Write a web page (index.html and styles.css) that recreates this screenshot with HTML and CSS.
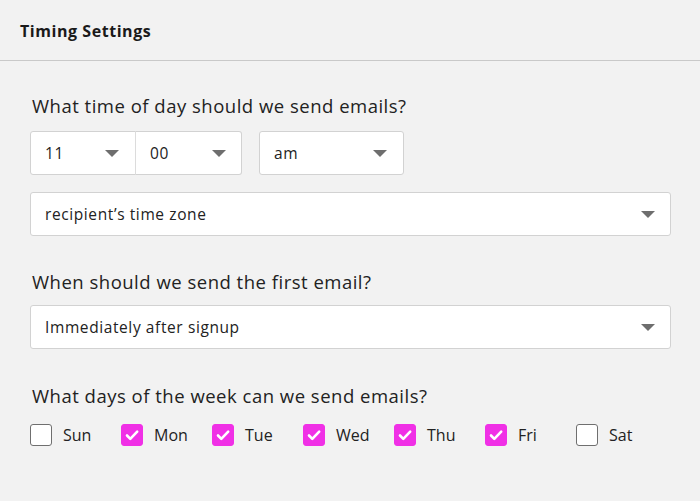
FILE: index.html
```html
<!DOCTYPE html>
<html>
<head>
<meta charset="utf-8">
<link rel="stylesheet" href="styles.css">
</head>
<body>
<header class="header">Timing Settings</header>
<main class="content">
  <div class="question">What time of day should we send emails?</div>
  <div class="time-row">
    <div class="joined">
      <div class="select hour"><span>11</span><span class="arrow"></span></div>
      <div class="select minute"><span>00</span><span class="arrow"></span></div>
    </div>
    <div class="select ampm"><span>am</span><span class="arrow"></span></div>
  </div>
  <div class="select full tz"><span>recipient’s time zone</span><span class="arrow"></span></div>

  <div class="question q2">When should we send the first email?</div>
  <div class="select full first"><span>Immediately after signup</span><span class="arrow"></span></div>

  <div class="question q3">What days of the week can we send emails?</div>
  <div class="days">
    <label class="day"><span class="box"></span>Sun</label>
    <label class="day"><span class="box checked"><svg viewBox="0 0 22 22"><path d="M6 11.5l3.3 3.3L16.2 7.6" /></svg></span>Mon</label>
    <label class="day"><span class="box checked"><svg viewBox="0 0 22 22"><path d="M6 11.5l3.3 3.3L16.2 7.6" /></svg></span>Tue</label>
    <label class="day"><span class="box checked"><svg viewBox="0 0 22 22"><path d="M6 11.5l3.3 3.3L16.2 7.6" /></svg></span>Wed</label>
    <label class="day"><span class="box checked"><svg viewBox="0 0 22 22"><path d="M6 11.5l3.3 3.3L16.2 7.6" /></svg></span>Thu</label>
    <label class="day"><span class="box checked"><svg viewBox="0 0 22 22"><path d="M6 11.5l3.3 3.3L16.2 7.6" /></svg></span>Fri</label>
    <label class="day"><span class="box"></span>Sat</label>
  </div>
</main>
</body>
</html>
```
FILE: styles.css
```css
html, body {
  margin: 0;
  padding: 0;
  background: #f2f2f2;
  font-family: "Open Sans", "Noto Sans", sans-serif;
  color: #1f1f1f;
}
.header {
  height: 61px;
  box-sizing: border-box;
  border-bottom: 1px solid #c9c9c9;
  display: flex;
  align-items: center;
  padding-left: 20px;
  padding-top: 1px;
  font-weight: 700;
  font-size: 16px;
  letter-spacing: 0.55px;
  color: #1a1a1a;
}
.content {
  padding: 33px 29px 0 30px;
}
.question {
  font-size: 18.5px;
  line-height: 24px;
  letter-spacing: 0.5px;
  padding-left: 2px;
  color: #222;
}
.q2 { margin-top: 34px; }
.q3 { margin-top: 35px; }
.time-row {
  display: flex;
  gap: 17px;
  margin-top: 13px;
}
.joined {
  display: flex;
}
.select {
  box-sizing: border-box;
  height: 44px;
  background: #fff;
  border: 1px solid #d2d2d2;
  border-radius: 3px;
  display: flex;
  align-items: center;
  justify-content: space-between;
  padding: 0 15px 0 14px;
  font-size: 15.5px;
  letter-spacing: 0.6px;
  color: #222;
}
.hour {
  width: 106px;
  border-top-right-radius: 0;
  border-bottom-right-radius: 0;
  padding-right: 16px;
}
.minute {
  width: 107px;
  border-top-left-radius: 0;
  border-bottom-left-radius: 0;
  border-left-color: #dcdcdc;
  margin-left: -1px;
  padding-right: 15px;
}
.ampm {
  width: 145px;
  padding-right: 16px;
}
.full {
  width: 100%;
}
.tz { margin-top: 17px; }
.first { margin-top: 11px; }
.arrow {
  width: 0;
  height: 0;
  border-left: 7.5px solid transparent;
  border-right: 7.5px solid transparent;
  border-top: 7px solid #6e6e6e;
}
.days {
  display: flex;
  margin-top: 16px;
}
.day {
  width: 91px;
  display: flex;
  align-items: center;
  gap: 11px;
  font-size: 16px;
  color: #222;
}
.box {
  box-sizing: border-box;
  width: 22px;
  height: 22px;
  border: 1.5px solid #6f6f6f;
  border-radius: 3px;
  background: #fff;
  display: flex;
}
.box.checked {
  background: #f030e6;
  border-color: #f030e6;
}
.box svg {
  width: 22px;
  height: 22px;
  margin: -1.5px;
  fill: none;
  stroke: #fff;
  stroke-width: 2.6;
  stroke-linecap: round;
  stroke-linejoin: round;
}
```
